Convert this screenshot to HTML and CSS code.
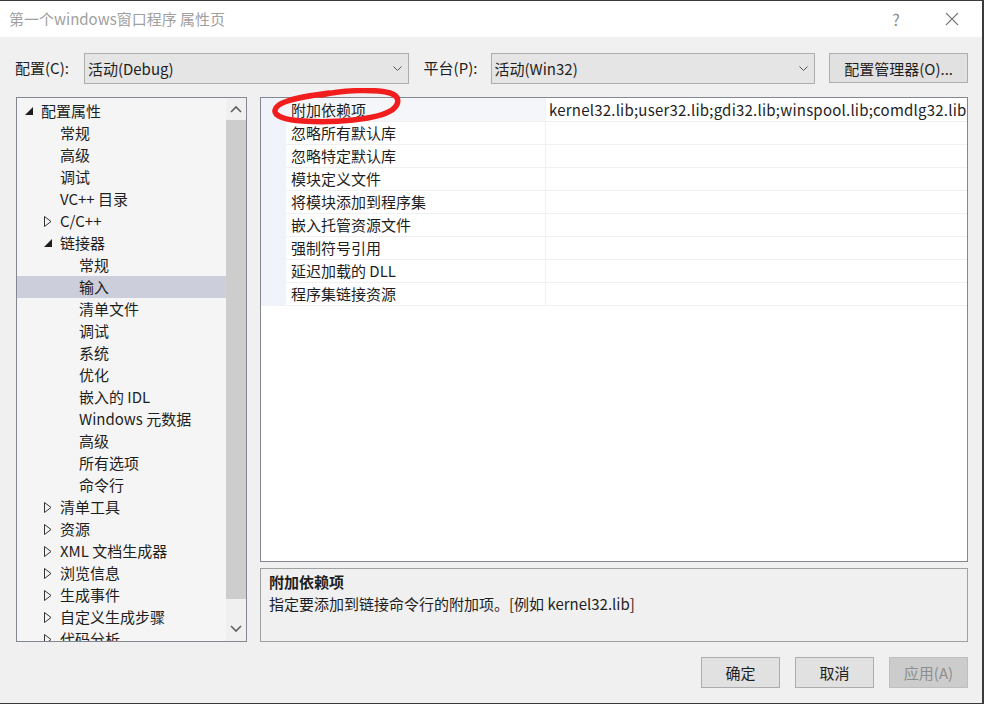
FILE: index.html
```html
<!DOCTYPE html>
<html lang="zh-CN">
<head>
<meta charset="utf-8">
<title>属性页</title>
<link rel="stylesheet" href="styles.css">
</head>
<body>
<div class="window">
  <div class="titlebar">
    <div class="title">第一个windows窗口程序 属性页</div>
    <div class="help">?</div>
    <div class="close">
      <svg width="14" height="14" viewBox="0 0 14 14"><path d="M1 1 L13 13 M13 1 L1 13" stroke="#7a7a7a" stroke-width="1.1" fill="none"/></svg>
    </div>
  </div>
  <div class="content">
    <div class="toolbar">
      <span class="label">配置(C):</span>
      <div class="select sel1"><span>活动(Debug)</span>
        <svg class="chev" width="9" height="6" viewBox="0 0 9 6"><path d="M0.5 0.5 L4.5 4.5 L8.5 0.5" stroke="#555" fill="none"/></svg>
      </div>
      <span class="label lab2">平台(P):</span>
      <div class="select sel2"><span>活动(Win32)</span>
        <svg class="chev" width="9" height="6" viewBox="0 0 9 6"><path d="M0.5 0.5 L4.5 4.5 L8.5 0.5" stroke="#555" fill="none"/></svg>
      </div>
      <div class="btn mgr">配置管理器(O)...</div>
    </div>

    <div class="main">
      <div class="tree">
        <div class="tree-list">
          <div class="row l0"><span class="tog"><svg width="8" height="8" viewBox="0 0 8 8"><polygon points="8,0 8,8 0,8" fill="#1e1e1e"/></svg></span>配置属性</div>
          <div class="row l1"><span class="tog"></span>常规</div>
          <div class="row l1"><span class="tog"></span>高级</div>
          <div class="row l1"><span class="tog"></span>调试</div>
          <div class="row l1"><span class="tog"></span>VC++ 目录</div>
          <div class="row l1"><span class="tog"><svg width="8" height="11" viewBox="0 0 8 11"><polygon points="0.5,0.5 7,5.5 0.5,10.5" fill="none" stroke="#333"/></svg></span>C/C++</div>
          <div class="row l1"><span class="tog"><svg width="8" height="8" viewBox="0 0 8 8"><polygon points="8,0 8,8 0,8" fill="#1e1e1e"/></svg></span>链接器</div>
          <div class="row l2"><span class="tog"></span>常规</div>
          <div class="row l2 selected"><span class="tog"></span>输入</div>
          <div class="row l2"><span class="tog"></span>清单文件</div>
          <div class="row l2"><span class="tog"></span>调试</div>
          <div class="row l2"><span class="tog"></span>系统</div>
          <div class="row l2"><span class="tog"></span>优化</div>
          <div class="row l2"><span class="tog"></span>嵌入的 IDL</div>
          <div class="row l2"><span class="tog"></span>Windows 元数据</div>
          <div class="row l2"><span class="tog"></span>高级</div>
          <div class="row l2"><span class="tog"></span>所有选项</div>
          <div class="row l2"><span class="tog"></span>命令行</div>
          <div class="row l1"><span class="tog"><svg width="8" height="11" viewBox="0 0 8 11"><polygon points="0.5,0.5 7,5.5 0.5,10.5" fill="none" stroke="#333"/></svg></span>清单工具</div>
          <div class="row l1"><span class="tog"><svg width="8" height="11" viewBox="0 0 8 11"><polygon points="0.5,0.5 7,5.5 0.5,10.5" fill="none" stroke="#333"/></svg></span>资源</div>
          <div class="row l1"><span class="tog"><svg width="8" height="11" viewBox="0 0 8 11"><polygon points="0.5,0.5 7,5.5 0.5,10.5" fill="none" stroke="#333"/></svg></span>XML 文档生成器</div>
          <div class="row l1"><span class="tog"><svg width="8" height="11" viewBox="0 0 8 11"><polygon points="0.5,0.5 7,5.5 0.5,10.5" fill="none" stroke="#333"/></svg></span>浏览信息</div>
          <div class="row l1"><span class="tog"><svg width="8" height="11" viewBox="0 0 8 11"><polygon points="0.5,0.5 7,5.5 0.5,10.5" fill="none" stroke="#333"/></svg></span>生成事件</div>
          <div class="row l1"><span class="tog"><svg width="8" height="11" viewBox="0 0 8 11"><polygon points="0.5,0.5 7,5.5 0.5,10.5" fill="none" stroke="#333"/></svg></span>自定义生成步骤</div>
          <div class="row l1"><span class="tog"><svg width="8" height="11" viewBox="0 0 8 11"><polygon points="0.5,0.5 7,5.5 0.5,10.5" fill="none" stroke="#333"/></svg></span>代码分析</div>
        </div>
        <div class="scrollbar">
          <div class="sb-btn"><svg width="12" height="8" viewBox="0 0 12 8"><path d="M1 7 L6 2 L11 7" stroke="#606060" stroke-width="1.6" fill="none"/></svg></div>
          <div class="sb-thumb"></div>
          <div class="sb-space"></div>
          <div class="sb-btn down"><svg width="12" height="8" viewBox="0 0 12 8"><path d="M1 1 L6 6 L11 1" stroke="#606060" stroke-width="1.6" fill="none"/></svg></div>
        </div>
      </div>

      <div class="right">
        <div class="grid">
          <div class="prow first"><div class="margin"></div><div class="pname">附加依赖项</div><div class="pval">kernel32.lib;user32.lib;gdi32.lib;winspool.lib;comdlg32.lib;advapi32.lib</div></div>
          <div class="prow"><div class="margin"></div><div class="pname">忽略所有默认库</div><div class="pval"></div></div>
          <div class="prow"><div class="margin"></div><div class="pname">忽略特定默认库</div><div class="pval"></div></div>
          <div class="prow"><div class="margin"></div><div class="pname">模块定义文件</div><div class="pval"></div></div>
          <div class="prow"><div class="margin"></div><div class="pname">将模块添加到程序集</div><div class="pval"></div></div>
          <div class="prow"><div class="margin"></div><div class="pname">嵌入托管资源文件</div><div class="pval"></div></div>
          <div class="prow"><div class="margin"></div><div class="pname">强制符号引用</div><div class="pval"></div></div>
          <div class="prow"><div class="margin"></div><div class="pname">延迟加载的 DLL</div><div class="pval"></div></div>
          <div class="prow"><div class="margin"></div><div class="pname">程序集链接资源</div><div class="pval"></div></div>
        </div>
        <svg class="mark" width="132" height="38" viewBox="0 0 132 38">
          <path d="M50 7 C72 2 104 1 119 5 C129 8 129 16 121 22 C106 32 62 35 32 33 C11 32 3 27 4 22 C5 15 20 10 58 5" stroke="#f21d1d" stroke-width="5.5" fill="none" stroke-linecap="round"/>
        </svg>
        <div class="desc">
          <div class="desc-title">附加依赖项</div>
          <div class="desc-text">指定要添加到链接命令行的附加项。[例如 kernel32.lib]</div>
        </div>
      </div>
    </div>

    <div class="footer">
      <div class="btn fbtn">确定</div>
      <div class="btn fbtn">取消</div>
      <div class="btn fbtn disabled">应用(A)</div>
    </div>
  </div>
</div>
</body>
</html>
```
FILE: styles.css
```css
* { box-sizing: border-box; }
html, body { margin: 0; padding: 0; }
body {
  width: 984px;
  height: 704px;
  overflow: hidden;
  font-family: "Noto Sans CJK SC", "Noto Sans", sans-serif;
  font-size: 15px;
  color: #1e1e1e;
  background: #f0f0f0;
}
.window {
  width: 984px;
  height: 704px;
  display: flex;
  flex-direction: column;
  border-right: 2px solid #3a3a3a;
  border-top: 1px solid #3a3a3a;
  border-bottom: 1px solid #3a3a3a;
  background: #f0f0f0;
}
.titlebar {
  height: 36px;
  background: #ffffff;
  display: flex;
  align-items: center;
  padding-left: 9px;
  flex-shrink: 0;
}
.title {
  flex: 1;
  color: #a0a0a0;
  font-size: 15px;
  line-height: 20px;
}
.help {
  color: #8a8a8a;
  font-size: 16px;
  width: 20px;
  text-align: center;
  margin-right: 39px;
}
.close {
  width: 14px;
  height: 14px;
  margin-right: 23px;
  display: flex;
}
.content {
  flex: 1;
  display: flex;
  flex-direction: column;
  padding: 16px 14px 0 16px;
}
.toolbar {
  display: flex;
  align-items: center;
  height: 30px;
}
.label {
  margin-left: -1px;
  width: 69px;
  line-height: 20px;
}
.lab2 { margin-left: 15px; width: 67px; }
.select {
  height: 31px;
  background: #e5e5e5;
  border: 1px solid #adadad;
  display: flex;
  align-items: center;
  padding-left: 3px;
  padding-right: 6px;
  justify-content: space-between;
}
.sel1 { width: 325px; }
.sel2 { width: 325px; }
.chev { margin-top: 1px; }
.btn {
  background: #e1e1e1;
  border: 1px solid #adadad;
  display: flex;
  align-items: center;
  justify-content: center;
}
.mgr {
  margin-left: 14px;
  width: 139px;
  height: 30px;
}
.main {
  display: flex;
  margin-top: 14px;
  height: 545px;
}
.tree {
  width: 232px;
  height: 545px;
  border: 1px solid #828790;
  background: #f5f5f5;
  display: flex;
  overflow: hidden;
}
.tree-list {
  flex: 1;
  padding-top: 2px;
  overflow: hidden;
}
.row {
  height: 22px;
  line-height: 22px;
  display: flex;
  align-items: center;
  white-space: nowrap;
}
.row.l0 { padding-left: 8px; }
.row.l1 { padding-left: 27px; }
.row.l2 { padding-left: 46px; }
.row.selected { background: #cccedb; }
.tog {
  width: 16px;
  height: 22px;
  display: flex;
  align-items: center;
  flex-shrink: 0;
}
.scrollbar {
  width: 20px;
  display: flex;
  flex-direction: column;
  background: #f0f0f0;
}
.sb-btn {
  height: 22px;
  display: flex;
  align-items: center;
  justify-content: center;
}
.sb-btn.down { height: 24px; }
.sb-thumb {
  height: 479px;
  background: #cdcdcd;
}
.sb-space { flex: 1; }
.right {
  position: relative;
  margin-left: 13px;
  width: 708px;
  display: flex;
  flex-direction: column;
}
.grid {
  height: 466px;
  border: 1px solid #828790;
  background: #ffffff;
  overflow: hidden;
  padding-top: 1px;
}
.prow {
  display: flex;
  height: 23px;
}
.prow:first-child { margin-top: -1px; height: 24px; }
.margin {
  width: 25px;
  background: #f0f3f9;
  flex-shrink: 0;
}
.pname {
  width: 260px;
  flex-shrink: 0;
  padding-left: 5px;
  line-height: 22px;
  border-bottom: 1px solid #f0f0f0;
  border-right: 1px solid #f0f0f0;
  white-space: nowrap;
}
.pval {
  flex: 1;
  padding-left: 3px;
  line-height: 22px;
  border-bottom: 1px solid #f0f0f0;
  white-space: nowrap;
  overflow: hidden;
  letter-spacing: 0.22px;
}
.prow.first .pname,
.prow.first .pval { line-height: 23px; }
.prow.first .pname { background: #f4f6f9; }
.mark {
  position: absolute;
  left: 11px;
  top: -9px;
}
.desc {
  margin-top: 6px;
  height: 74px;
  border: 1px solid #a0a0a0;
  background: #f0f0f0;
  padding: 2px 8px;
}
.desc-title {
  font-weight: bold;
  line-height: 22px;
}
.desc-text {
  line-height: 22px;
}
.footer {
  display: flex;
  justify-content: flex-end;
  margin-top: 15px;
  gap: 15px;
}
.fbtn {
  width: 79px;
  height: 31px;
}
.fbtn.disabled {
  background: #cccccc;
  border-color: #bfbfbf;
  color: #8d8d8d;
}
```
